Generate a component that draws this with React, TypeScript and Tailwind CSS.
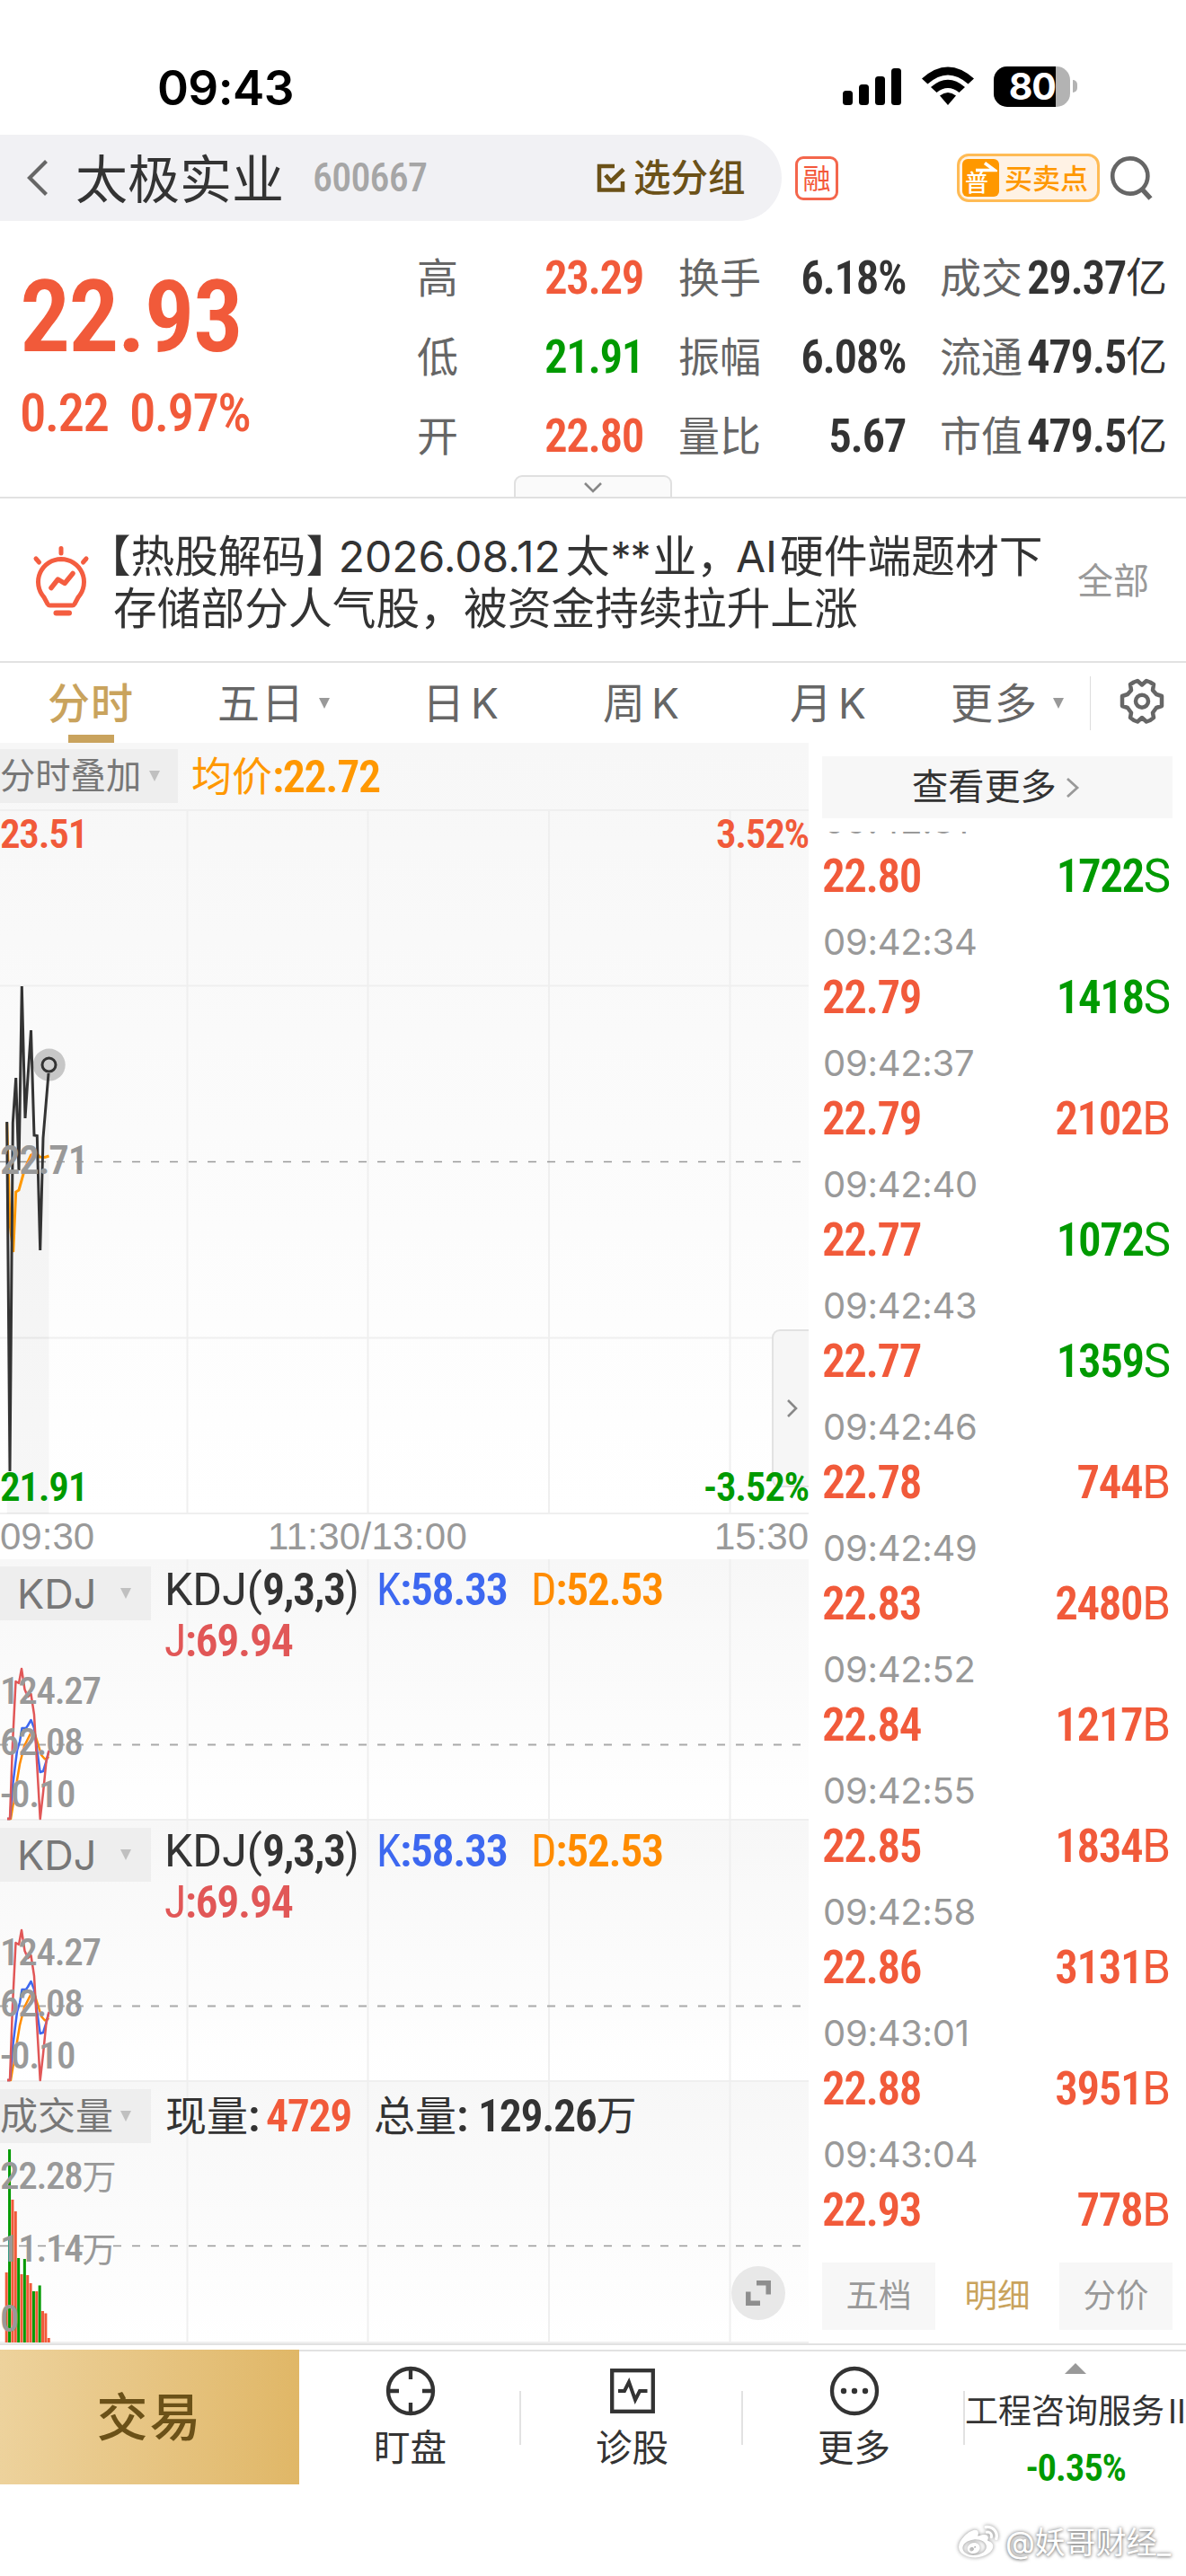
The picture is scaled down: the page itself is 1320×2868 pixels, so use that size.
import React from "react";
import { FaWeibo } from "react-icons/fa";

const NUM_BASE = "[font-family:Roboto,'Noto_Sans_CJK_SC',sans-serif] [font-stretch:87%] whitespace-nowrap leading-none";
const NUM = `${NUM_BASE} font-semibold tracking-[-0.028em]`;

function StatusBar() {
  return (
    <div className="h-[150px] flex items-start justify-between pl-[175px] pr-[121px] text-black">
      <div className="mt-[72px] text-[53px] leading-[52px] font-semibold tracking-[-0.6px]">09:43</div>
      <div className="mt-[74px] flex items-start">
        <svg width="66" height="44" viewBox="0 0 66 44" className="mr-[22px]">
          <rect x="0" y="27" width="11" height="16" rx="3.5" />
          <rect x="18" y="20" width="11" height="23" rx="3.5" />
          <rect x="36" y="11" width="11" height="32" rx="3.5" />
          <rect x="54" y="2" width="11" height="41" rx="3.5" />
        </svg>
        <svg width="58" height="44" viewBox="0 0 58 44" className="mr-[22px]">
          <path d="M0 13.500Q29-12.500 58 13.500L51.500 19.500Q29-0.500 6.500 19.500Z" />
          <path d="M10 23Q29 6.500 48 23L41.500 29Q29 19 16.500 29Z" />
          <path d="M20 32.500Q29 25.500 38 32.500L29 43Z" />
        </svg>
        <div className="relative w-[85px] h-[45px] rounded-[15px] bg-[#b3b3b3] flex">
          <div className="w-[69px] h-[45px] rounded-l-[15px] bg-black flex items-center justify-end text-white text-[41px] font-bold leading-[45px] tracking-[-1px]">80</div>
        </div>
        <div className="ml-[3px] mt-[15px] w-[5px] h-[14px] rounded-r-full bg-[#b3b3b3]" />
      </div>
    </div>
  );
}

function Header() {
  return (
    <div className="h-[96px] flex items-center">
      <div className="w-[870px] h-[96px] shrink-0 bg-[#f1f1f4] rounded-r-[48px] flex items-center pl-[29px]">
        <svg width="26" height="42" viewBox="0 0 26 42" className="shrink-0" fill="none" stroke="#666" strokeWidth="4.2">
          <path d="M22.500 2.500L4 21L22.500 39.500" />
        </svg>
        <div className="ml-[29px] pt-[4px] w-[235px] shrink-0 text-[58px] leading-none text-[#333]">太极实业</div>
        <div className={`${NUM_BASE} tracking-[-0.018em] ml-[29px] w-[127px] text-[44px] text-[#a6a6a6] font-medium`}>600667</div>
        <svg width="33" height="33" viewBox="0 0 33 33" className="ml-[189px] shrink-0" fill="none" stroke="#6b5118" strokeWidth="4.500">
          <path d="M20 3H3V29.500H29V20" />
          <path d="M10 13L16 20L30 6.500" strokeWidth="4.800" />
        </svg>
        <div className="ml-[8px] pt-[2px] text-[41.500px] leading-none font-medium text-[#6b5118] whitespace-nowrap">选分组</div>
      </div>
      <div className="ml-[15px] w-[48px] h-[49px] rounded-[9px] border-[3px] border-[#f4664c] flex items-center justify-center text-[31px] leading-none text-[#f4573a]">融</div>
      <div className="ml-[132px] w-[159px] h-[54px] rounded-[13px] border-[3px] border-[#ffbb55] bg-[#fff2e4] flex items-center pl-[3px]">
        <div className="relative w-[41px] h-[42px] rounded-[6px] bg-[#ff9800] text-white flex items-end pl-[3px] pb-[2px]">
          <span className="text-[26px] leading-none font-medium">普</span>
          <svg className="absolute left-[13px] top-[3px]" width="26" height="13" viewBox="0 0 26 13" fill="none" stroke="#fff" strokeWidth="3.600">
            <path d="M2 9.500H23L12 1.500" />
          </svg>
        </div>
        <div className="ml-[6px] text-[31px] leading-none font-medium text-[#ff9800]">买卖点</div>
      </div>
      <svg width="50" height="50" viewBox="0 0 50 50" className="ml-[11px]" fill="none" stroke="#666" strokeWidth="4.600">
        <circle cx="22.800" cy="23" r="19.600" />
        <path d="M35.500 37L45.500 48" strokeWidth="5.500" />
      </svg>
    </div>
  );
}

const quotes = [
  ["高", "23.29", "text-[#f15a3a]", "换手", "6.18%", "成交", "29.37"],
  ["低", "21.91", "text-[#009a00]", "振幅", "6.08%", "流通", "479.5"],
  ["开", "22.80", "text-[#f15a3a]", "量比", "5.67", "市值", "479.5"],
];

function Quote() {
  return (
    <div className="relative h-[309px] flex border-b-[2px] border-[#e2e2e2]">
      <div className="w-[464px] pl-[22px] text-[#f15a3a]">
        <div className={`${NUM_BASE} font-semibold tracking-[-0.018em] mt-[51px] text-[112px]`}>22.93</div>
        <div className={`${NUM_BASE} font-medium tracking-[-0.028em] mt-[21px] text-[59px] flex`}>
          <span className="w-[122px]">0.22</span>
          <span>0.97%</span>
        </div>
      </div>
      <div className="mt-[19px]">
        {quotes.map((q) => (
          <div key={q[0]} className="h-[88px] flex items-center leading-none text-[46px] text-[#666]">
            <span className="w-[100px]">{q[0]}</span>
            <span className={`${NUM} ${q[2]} w-[152px] text-right text-[51px]`}>{q[1]}</span>
            <span className="ml-[39px] w-[100px]">{q[3]}</span>
            <span className={`${NUM} w-[153px] text-right text-[51px] text-[#333]`}>{q[4]}</span>
            <span className="ml-[38px] w-[92px]">{q[5]}</span>
            <span className={`${NUM} w-[161px] flex items-center justify-end text-[51px] text-[#333]`}>
              {q[6]}
              <span className="text-[46px] font-normal tracking-normal">亿</span>
            </span>
          </div>
        ))}
      </div>
      <div className="absolute left-[572px] bottom-[-2px] w-[176px] h-[26px] rounded-t-[9px] border-[2px] border-[#e0e0e0] bg-[#fafafa] flex justify-center pt-[5px]">
        <svg width="24" height="14" viewBox="0 0 24 14" fill="none" stroke="#888" strokeWidth="2.600">
          <path d="M3 2L12 11L21 2" />
        </svg>
      </div>
    </div>
  );
}

function News() {
  return (
    <div className="h-[183px] flex items-start border-b-[2px] border-[#e2e2e2] text-[#333]">
      <svg width="64" height="80" viewBox="0 0 64 80" className="ml-[36px] mt-[52px] shrink-0" fill="none" stroke="#f45d40" strokeWidth="5" strokeLinecap="round" strokeLinejoin="round">
        <path d="M32 3.500V9M4 15L7.500 19M60 15L56.500 19" />
        <path d="M32 15.500a25.500 25.500 0 0 0-19 42.500l4 7.500a3 3 0 0 0 2.500 1.500h25a3 3 0 0 0 2.500-1.500l4-7.500a25.500 25.500 0 0 0-19-42.500Z" />
        <path d="M21 47.500L28.500 38L36 42.500L45 31.500" strokeWidth="5.500" />
        <path d="M26.500 75.500H41" strokeWidth="6" />
      </svg>
      <div className="ml-[26px] w-[1073px] mt-[36px] text-[48.750px] leading-[58px] whitespace-nowrap">
        <div className="-ml-[5px] flex">
          <span className="[font-feature-settings:'halt']">【</span>
          <span>热股解码</span>
          <span className="[font-feature-settings:'halt']">】</span>
          <span className="ml-[12px] w-[253px] text-[48px]">2026.08.12</span>
          <span>太</span>
          <span className="ml-[1px] w-[47px] text-[46px] tracking-[-1px]">**</span>
          <span>业，</span>
          <span className="w-[49px] ml-[-5px] text-[48px]">AI</span>
          <span>硬件端题材下</span>
        </div>
        <div>存储部分人气股，被资金持续拉升上涨</div>
      </div>
      <div className="mt-[72px] text-[40px] leading-none text-[#999]">全部</div>
    </div>
  );
}

function Caret({ color, className = "" }: { color: string; className?: string }) {
  return (
    <svg width="12" height="12" viewBox="0 0 12 12" className={`shrink-0 ${className}`}>
      <path d="M0 0H12L6 12Z" fill={color} />
    </svg>
  );
}

function Tabs() {
  return (
    <div className="h-[89px] flex items-center text-[47px] leading-none text-[#666]">
      <div className="relative ml-[53px] w-[189px] h-[89px] flex items-center font-medium text-[#c9a35d] tracking-[1px]">
        分时
        <div className="absolute left-[23px] bottom-0 w-[51px] h-[9px] bg-[#c9a35d]" />
      </div>
      <div className="w-[228px] flex items-center tracking-[2px]">五日<Caret color="#999" className="ml-[15px]" /></div>
      <div className="w-[201px] flex items-center gap-[7px]">日<span className="text-[46px]">K</span></div>
      <div className="w-[208px] flex items-center gap-[7px]">周<span className="text-[46px]">K</span></div>
      <div className="w-[179px] flex items-center gap-[7px]">月<span className="text-[46px]">K</span></div>
      <div className="w-[155px] flex items-center tracking-[2px]">更多<Caret color="#999" className="ml-[16px]" /></div>
      <div className="w-px h-[60px] bg-[#ddd]" />
      <svg width="52" height="52" viewBox="0 0 52 52" className="ml-[31px] mb-[4px]" fill="none" stroke="#666" strokeWidth="4.500" strokeLinejoin="round">
        <path d="M17 4.500L21 3L26 7.500L31 3L35 4.500L39 7L38 13.500L42 18L48 20V31L42 33L38 38.500L39 44L35 47L31 48.500L26 44L21 48.500L17 47L13 44L14 38.500L10 33L4 31V20L10 18L14 13.500L13 7Z" />
        <circle cx="26" cy="25.700" r="7" />
      </svg>
    </div>
  );
}

const gridX = [208.5, 409.5, 611, 812.5];

function Grid({ h, top = 0 }: { h: number; top?: number }) {
  return (
    <g stroke="#efefef" strokeWidth="2">
      {gridX.map((x) => <path key={x} d={`M${x} ${top}V${h}`} />)}
      <path d={`M0 ${h - 1}H900`} />
    </g>
  );
}

function PriceChart() {
  return (
    <div className="relative h-[859px] bg-gradient-to-b from-[#f7f7f7] to-white">
      <svg className="absolute inset-0" width="900" height="859" viewBox="0 828 900 859" fill="none">
        <g stroke="#efefef" strokeWidth="2">
          {gridX.map((x) => <path key={x} d={`M${x} 903V1686`} />)}
          <path d="M0 903H900M0 1098.500H900M0 1490.500H900M0 1686H900" />
        </g>
        <path d="M0 1294.500H900" stroke="#999" strokeWidth="1.600" strokeDasharray="9 12" />
        <path d="M7.700 1251L11 1639L14.300 1251L17.700 1201L21 1304L24.300 1099L28 1246L34.500 1148L38 1265L41.300 1265.500L44.700 1393L48 1268L54.500 1187V1686H7.700Z" fill="#000" fillOpacity="0.03" />
        <path d="M7.700 1251L11 1363L14.700 1395L17.700 1328L21 1326L26 1308L29 1299L34.500 1287L38 1285L41 1285.500L44 1289L50 1289.500L54.500 1288" stroke="#ff9800" strokeWidth="3" />
        <circle cx="54.700" cy="1186.600" r="18" fill="#bdbdbd" fillOpacity="0.85" />
        <path d="M7.700 1250L11 1639L14.300 1251L17.700 1201L21 1304L24.300 1099L28 1246L34.500 1148L38 1265L41.300 1265.500L44.700 1393L48 1268L54 1196" stroke="#333" strokeWidth="3" />
        <circle cx="54.500" cy="1186.600" r="7.500" fill="#d0d0d0" stroke="#333" strokeWidth="3" />
      </svg>
      <div className="relative pt-[7px] flex">
        <div className="w-[198px] h-[60px] bg-[#eee] flex items-center text-[39.300px] leading-none text-[#777]">
          分时叠加<Caret color="#c0c0c0" className="ml-[9px]" />
        </div>
        <div className={`${NUM} ml-[15px] h-[62px] flex items-center text-[50px] text-[#ff9800]`}>
          <span className="text-[45px] font-normal tracking-normal">均价</span>:22.72
        </div>
      </div>
      <div className={`${NUM} absolute left-0 top-[79px] text-[45px] text-[#f15a3a]`}>23.51</div>
      <div className={`${NUM} absolute right-0 top-[79px] text-[45px] text-[#f15a3a]`}>3.52%</div>
      <div className={`${NUM} absolute left-0 top-[442px] text-[45px] text-[#999]`}>22.71</div>
      <div className={`${NUM} absolute left-0 top-[806px] text-[45px] text-[#009a00]`}>21.91</div>
      <div className="absolute right-0 top-[653px] w-[41px] h-[176px] rounded-l-[9px] border-[2px] border-r-0 border-[#e2e2e2] bg-[#f6f6f6] flex items-center justify-center">
        <svg width="14" height="24" viewBox="0 0 14 24" fill="none" stroke="#888" strokeWidth="2.600" className="ml-[3px]">
          <path d="M2 3L11 12L2 21" />
        </svg>
      </div>
      <div className={`${NUM} absolute right-0 top-[806px] text-[45px] text-[#009a00]`}>-3.52%</div>
    </div>
  );
}

function IndicatorTag({ children }: { children: React.ReactNode }) {
  return <div className="relative mt-[8px] w-[168px] h-[60px] bg-[#eee] flex items-center leading-none text-[#777] shrink-0">{children}</div>;
}

function KdjPanel() {
  return (
    <div className="relative h-[291px] bg-gradient-to-b from-[#f7f7f7] to-white">
      <svg className="absolute inset-0" width="900" height="291" viewBox="0 1737 900 291" fill="none">
        <g transform="translate(0 1737)"><Grid h={291} /></g>
        <path d="M0 1943.500H900" stroke="#aaa" strokeWidth="1.800" strokeDasharray="9 12" />
        <g strokeWidth="2.500" strokeLinejoin="round">
          <path stroke="#ff8c00" d="M8 2026H12L17 1995L22 1965L27 1945L34.500 1930L39 1932L43 1945L46 1955L50 1959.500L54.500 1957" />
          <path stroke="#3d68f0" d="M8 2026H11L14 1990L19 1950L22 1940L24.500 1925H29L31 1922L34.500 1916L38 1925L41 1948L44.700 1974L48 1973L51.500 1962L54.500 1950" />
          <path stroke="#e15757" d="M8 2026H11L14 1943L17.500 1873L21 1875L24 1859L27.500 1882L31 1890L34.500 1887L38 1910L44.700 2026L48 1997L51.500 1962L54.500 1950" />
        </g>
      </svg>
      <div className="relative flex">
        <IndicatorTag>
          <span className="ml-[19px] w-[115px] text-[45px]">KDJ</span>
          <Caret color="#c0c0c0" />
        </IndicatorTag>
        <div className={`${NUM} ml-[15px] mt-[5px] text-[50px]`}>
          <div className="h-[57px] flex items-center text-[#333]">
            <div className="w-[236px]"><span className="font-normal [font-stretch:91%] tracking-normal">KDJ(</span>9,3,3<span className="font-normal">)</span></div>
            <div className="w-[172px] text-[#3d68f0]"><span className="font-normal">K</span>:58.33</div>
            <div className="text-[#ff8c00]"><span className="font-normal">D</span>:52.53</div>
          </div>
          <div className="h-[57px] flex items-center text-[#e15757]"><span className="font-normal">J</span>:69.94</div>
        </div>
      </div>
      <div className={`${NUM_BASE} font-medium tracking-[-0.03em] absolute left-0 top-[124px] text-[#999] text-[43px]`}>
        <div className="h-[57px] leading-[44px]">124.27</div>
        <div className="h-[58px] leading-[44px]">62.08</div>
        <div className="h-[57px] leading-[44px]">-0.10</div>
      </div>
    </div>
  );
}

const bars: [number, string][] = [
  [78, "#f15a3a"], [215, "#009a00"], [159, "#f15a3a"], [146, "#f15a3a"], [94, "#009a00"],
  [76, "#f15a3a"], [93, "#009a00"], [75, "#f15a3a"], [66, "#f15a3a"], [57, "#009a00"],
  [57, "#f15a3a"], [63.5, "#009a00"], [35, "#f15a3a"], [32.5, "#f15a3a"], [5, "#f15a3a"],
];

function VolumePanel() {
  return (
    <div className="relative h-[291px] bg-gradient-to-b from-[#f7f7f7] to-white">
      <svg className="absolute inset-0" width="900" height="291" viewBox="0 0 900 291" fill="none">
        <Grid h={291} />
        <path d="M0 182.500H900" stroke="#999" strokeWidth="1.600" strokeDasharray="9 12" />
        {bars.map(([h, c], i) => <rect key={i} x={5.7 + i * 3.36} y={290 - h} width="3" height={h} fill={c} />)}
      </svg>
      <div className="relative flex">
        <IndicatorTag>
          <span className="w-[134px] text-[42px]">成交量</span>
          <Caret color="#c0c0c0" />
        </IndicatorTag>
        <div className={`${NUM} ml-[16px] mt-[9px] h-[58px] flex items-center text-[50px] text-[#333]`}>
          <span className="text-[46px] font-normal tracking-normal">现量</span><span className="w-[20px]">:</span>
          <span className="w-[120px] text-[#f15a3a]">4729</span>
          <span className="text-[46px] font-normal tracking-normal">总量</span><span className="w-[24px]">:</span>
          129.26<span className="text-[45px] font-normal tracking-normal">万</span>
        </div>
      </div>
      <div className={`${NUM_BASE} font-medium tracking-[-0.03em] absolute left-0 top-[82px] text-[#999] text-[43px]`}>
        <div className="h-[81px] leading-[44px]">22.28<span className="font-normal text-[38px] tracking-normal">万</span></div>
        <div className="h-[78px] leading-[44px]">11.14<span className="font-normal text-[38px] tracking-normal">万</span></div>
        <div className="leading-[44px]">0</div>
      </div>
      <div className="absolute left-[814px] top-[205px] w-[60px] h-[60px] rounded-full bg-[#e8e8e8] flex items-center justify-center">
        <svg width="28" height="28" viewBox="0 0 28 28" fill="none" stroke="#8e8e8e" strokeWidth="5.500">
          <path d="M12 2.700H25.200V15.500" />
          <path d="M2.800 12.500V25.200H16" />
        </svg>
      </div>
    </div>
  );
}

const ticks: [string, string, string, string][] = [
  ["09:42:31", "22.80", "1722", "S"], ["09:42:34", "22.79", "1418", "S"], ["09:42:37", "22.79", "2102", "B"],
  ["09:42:40", "22.77", "1072", "S"], ["09:42:43", "22.77", "1359", "S"], ["09:42:46", "22.78", "744", "B"],
  ["09:42:49", "22.83", "2480", "B"], ["09:42:52", "22.84", "1217", "B"], ["09:42:55", "22.85", "1834", "B"],
  ["09:42:58", "22.86", "3131", "B"], ["09:43:01", "22.88", "3951", "B"], ["09:43:04", "22.93", "778", "B"],
];

function TickColumn() {
  return (
    <div className="ml-[15px] w-[390px] pt-[15px]">
      <div className="h-[69px] bg-[#f7f7f7] flex items-center pl-[100px] text-[40.200px] leading-none text-[#333]">
        查看更多
        <svg width="18" height="26" viewBox="0 0 18 26" fill="none" stroke="#999" strokeWidth="2.800" className="ml-[9px]">
          <path d="M3 3L14 13L3 23" />
        </svg>
      </div>
      <div className="mt-[15px] h-[1593px] overflow-hidden">
        <div className="-mt-[37px]">
          {ticks.map(([time, price, vol, side]) => (
            <div key={time} className="h-[135px]">
              <div className="h-[50px] flex items-center pl-[1px] text-[40px] leading-none tracking-[-0.300px] text-[#999]">{time}</div>
              <div className={`h-[72px] flex items-center justify-between pr-[2px] ${side === "S" ? "text-[#009a00]" : "text-[#f15a3a]"}`}>
                <span className={`${NUM} text-[51px] text-[#f15a3a]`}>{price}</span>
                <span className={`${NUM} text-[51px] flex items-center`}>
                  {vol}
                  <span className="font-normal [font-stretch:94%] tracking-normal">{side}</span>
                </span>
              </div>
            </div>
          ))}
        </div>
      </div>
      <div className="flex justify-between text-[36.500px] leading-none text-[#999]">
        <div className="w-[126px] h-[75px] bg-[#f7f7f7] flex items-center justify-center">五档</div>
        <div className="w-[126px] h-[75px] flex items-center justify-center text-[#c9a35d]">明细</div>
        <div className="w-[126px] h-[75px] bg-[#f7f7f7] flex items-center justify-center">分价</div>
      </div>
    </div>
  );
}

function NavItem({ label, children }: { label: string; children: React.ReactNode }) {
  return (
    <div className="relative w-[247px] flex flex-col items-center pt-[16px] text-[40.500px] leading-none text-[#333]">
      <svg width="56" height="56" viewBox="0 0 56 56" fill="none" stroke="#333" strokeWidth="4.300">{children}</svg>
      <span className="mt-[16px]">{label}</span>
      <div className="absolute right-0 top-[44px] w-[2px] h-[60px] bg-[#e2e2e2]" />
    </div>
  );
}

function BottomBar() {
  return (
    <div className="border-t-[2px] border-[#e2e2e2] pt-[5px]">
      <div className="relative flex h-[150px]">
        <div className="w-[333px] h-[150px] shrink-0 bg-gradient-to-r from-[#edd29c] to-[#e0b767] flex items-center justify-center text-[57px] leading-none font-medium tracking-[2px] text-[#6b5118]">交易</div>
        <div className="flex-1 flex border-t-[2px] border-[#e2e2e2]">
          <NavItem label="盯盘">
            <circle cx="28" cy="28" r="25" />
            <path d="M28 4V15M28 41V52M4 28H15M41 28H52" />
          </NavItem>
          <NavItem label="诊股">
            <rect x="5.200" y="5.200" width="45.600" height="45.600" />
            <path d="M12 28H19L24 18L31 38L36 28H44.500" strokeWidth="4" />
          </NavItem>
          <NavItem label="更多">
            <circle cx="28" cy="28" r="25" />
            <g fill="#333" stroke="none">
              <circle cx="16" cy="28" r="3.200" /><circle cx="28" cy="28" r="3.200" /><circle cx="40" cy="28" r="3.200" />
            </g>
          </NavItem>
          <div className="w-[246px] flex flex-col items-center pt-[13px]">
            <svg width="24" height="12" viewBox="0 0 24 12" className="shrink-0"><path d="M0 12L12 0L24 12Z" fill="#999" /></svg>
            <div className="mt-[23px] self-start flex whitespace-nowrap text-[37px] leading-none text-[#333]">
              工程咨询服务<span className="ml-[4px]">Ⅱ</span>
            </div>
            <div className={`${NUM_BASE} font-semibold tracking-[-0.03em] mt-[23px] text-[43px] text-[#009a00]`}>-0.35%</div>
          </div>
        </div>
      </div>
    </div>
  );
}

export default function App() {
  return (
    <div className="w-[1320px] h-[2868px] bg-white overflow-hidden flex flex-col [font-family:Inter,'Noto_Sans_CJK_SC',sans-serif]">
      <StatusBar />
      <Header />
      <Quote />
      <News />
      <Tabs />
      <div className="flex h-[1782px] shrink-0">
        <div className="w-[900px] shrink-0">
          <PriceChart />
          <div className="h-[50px] bg-white flex items-center [font-family:'Liberation_Sans',sans-serif] text-[42px] leading-none text-[#999]">
            <span className="w-[298px]">09:30</span>
            <span className="tracking-[0.300px]">11:30/13:00</span>
            <span className="ml-auto">15:30</span>
          </div>
          <KdjPanel />
          <KdjPanel />
          <VolumePanel />
        </div>
        <TickColumn />
      </div>
      <BottomBar />
      <div className="mt-[43px] pl-[1064px] flex items-center gap-[5px] text-[34px] leading-none text-white whitespace-nowrap [text-shadow:0_0_4px_#777,0_1px_3px_#aaa]">
        <FaWeibo className="w-[50px] h-[44px] shrink-0 drop-shadow-[0_0_2px_#888]" />
        @妖哥财经_
      </div>
    </div>
  );
}
